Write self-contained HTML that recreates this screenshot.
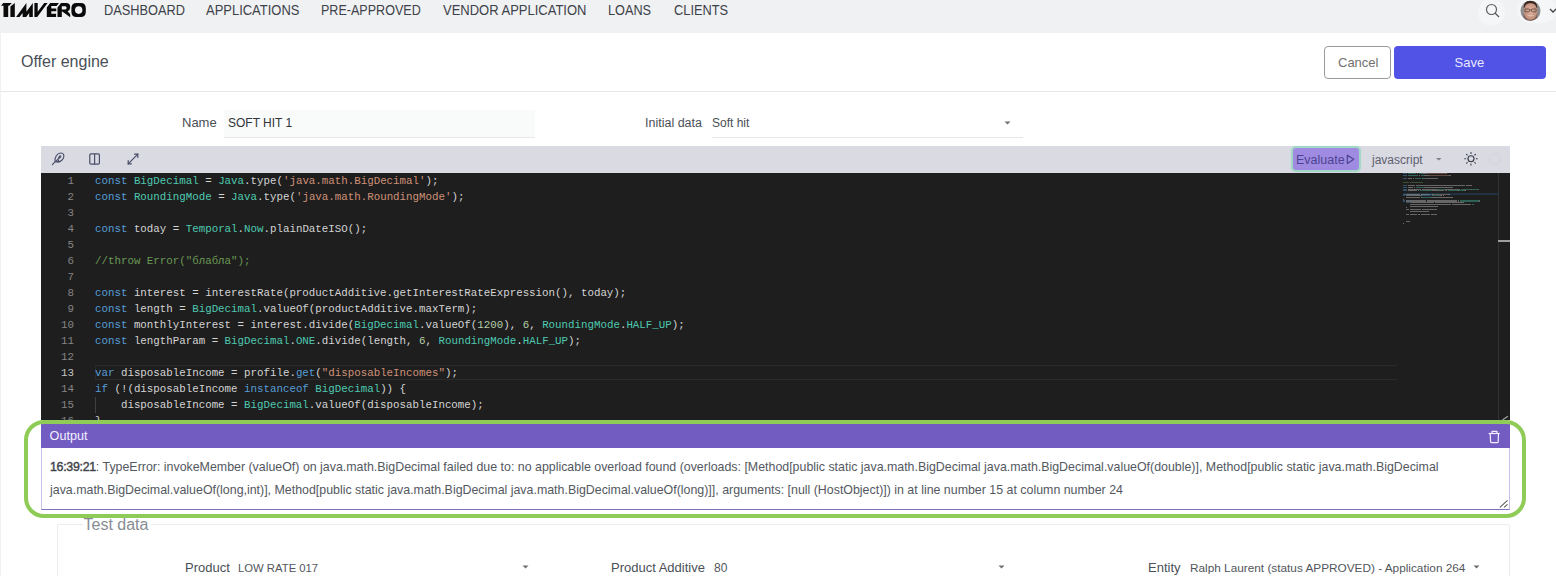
<!DOCTYPE html>
<html><head><meta charset="utf-8">
<style>
*{box-sizing:border-box;margin:0;padding:0}
html,body{width:1556px;height:576px;overflow:hidden;background:#f0f1f3;font-family:"Liberation Sans",sans-serif;position:relative}
.a{position:absolute;white-space:nowrap}
#panel{position:absolute;left:1px;top:33px;width:1555px;height:543px;background:#fff}
.nav{font-size:14px;color:#3d4149;top:2px;line-height:16px;transform-origin:0 0}
.code{position:absolute;left:41px;top:173px;width:1469px;height:247px;background:#1e1e1e;overflow:hidden}
.ln{position:absolute;left:0;width:33px;text-align:right;font-family:"Liberation Mono",monospace;font-size:10.8px;color:#858585;line-height:16px}
.cl{position:absolute;left:54px;font-family:"Liberation Mono",monospace;font-size:10.8px;color:#d4d4d4;line-height:16px;white-space:pre}
.k{color:#569cd6}.t{color:#4ec9b0}.s{color:#ce9178}.c{color:#6a9955}.n{color:#b5cea8}
.mmap i{position:absolute;height:1.2px;opacity:.4}
</style></head><body>
<!-- top nav -->
<svg class="a" style="left:0;top:0" width="90" height="20" viewBox="0 0 90 20"><g fill="#0a0a0a">
<path d="M1 5.7L3.3 3H11.8L9.2 5.7H8.2V17H3.5V5.7Z"/>
<path d="M10.4 6.6L14.8 3V17H10.4Z"/>
<path d="M16.1 17L26.4 3V11.65L32.8 3V17H29.2V12.9L26.2 17H22.6V12.9L19.5 17Z"/>
<path d="M34.4 3H37.7V11.8L44.2 3H47.6L37.2 17H34.4Z"/>
<path d="M46.8 17V7.5L50.2 3H58.9L56.6 6.1H51.3V8.6H56.3V11.2H51.3V13.8H56.1V17Z"/>
<path fill-rule="evenodd" d="M57.5 17V7.5L61 3H66.2Q70.2 3 70.2 7.2Q70.2 10.2 67.6 11.2L70.2 14.3V17.3L62.3 11.4H61.8V17ZM61.8 6.3V9.4H65.4Q66.6 9.4 66.6 7.85Q66.6 6.3 65.4 6.3Z"/>
<path fill-rule="evenodd" d="M76.5 3H80.7Q85.8 3 85.8 8.2V11.8Q85.8 17 80.7 17H76.5Q71.4 17 71.4 11.8V8.2Q71.4 3 76.5 3ZM78.7 6.3Q75 6.3 75 10.1Q75 13.9 78.7 13.9Q82.4 13.9 82.4 10.1Q82.4 6.3 78.7 6.3Z"/>
</g></svg>
<div class="a nav" style="left:103.5px;transform:scaleX(0.9132)">DASHBOARD</div>
<div class="a nav" style="left:206.0px;transform:scaleX(0.9257)">APPLICATIONS</div>
<div class="a nav" style="left:321.3px;transform:scaleX(0.8966)">PRE-APPROVED</div>
<div class="a nav" style="left:443.0px;transform:scaleX(0.9282)">VENDOR APPLICATION</div>
<div class="a nav" style="left:608.4px;transform:scaleX(0.9074)">LOANS</div>
<div class="a nav" style="left:673.5px;transform:scaleX(0.9154)">CLIENTS</div>
<!-- search -->
<div class="a" style="left:1478px;top:-1px;width:27px;height:27px;border-radius:50%;background:#f5f6f8"></div>
<svg class="a" style="left:1484px;top:3px" width="18" height="16" viewBox="0 0 18 16"><circle cx="7.5" cy="6.5" r="5" fill="none" stroke="#5a5a5a" stroke-width="1.15"/><line x1="11" y1="10" x2="15" y2="14" stroke="#5a5a5a" stroke-width="1.3"/></svg>
<div class="a" style="left:1517px;top:-3px;width:39px;height:26px;border-radius:13px;background:#f5f6f8"></div>
<svg class="a" style="left:1520px;top:0px" width="22" height="22" viewBox="0 0 22 22">
<defs><clipPath id="av"><circle cx="10.5" cy="10.8" r="10"/></clipPath><radialGradient id="fg" cx="0.5" cy="0.45" r="0.6"><stop offset="0" stop-color="#e2b4a0"/><stop offset="1" stop-color="#b88672"/></radialGradient></defs>
<g clip-path="url(#av)"><rect width="22" height="22" fill="#8f8f8f"/>
<ellipse cx="10.5" cy="11.5" rx="6.8" ry="9.5" fill="url(#fg)"/>
<path d="M3.6 7.5 Q4 0.5 10.5 0.6 Q17 0.5 17.4 7.5 L16.4 7.8 Q15.8 3.2 10.5 3.3 Q5.2 3.2 4.6 7.8 Z" fill="#3b2820"/>
<g fill="none" stroke="#3a2a26" stroke-width="0.75" opacity=".85"><rect x="4.8" y="9" width="4.8" height="2.8" rx="1"/><rect x="11.4" y="9" width="4.8" height="2.8" rx="1"/><path d="M9.6 10H11.4"/></g>
<path d="M6.5 15 Q10.5 17.5 14.5 15 Q10.5 16 6.5 15Z" fill="#f2ddd2"/>
<path d="M3.8 13 Q5 19.5 10.5 19.8 Q16 19.5 17.2 13 L17.5 22 H3.5Z" fill="#6b5048" opacity=".75"/>
</g></svg>
<svg class="a" style="left:1549px;top:8px" width="8" height="6" viewBox="0 0 8 6"><path d="M1 1 L4 4 L7 1" fill="none" stroke="#444" stroke-width="1.3"/></svg>

<div id="panel"></div>
<!-- header -->
<div class="a" style="left:21px;top:52px;font-size:16px;color:#4a4f57;line-height:19px">Offer engine</div>
<div class="a" style="left:1324px;top:46px;width:67px;height:33px;border:1px solid #9a9a9a;border-radius:4px;background:#fff"></div>
<div class="a" style="left:1338px;top:55px;font-size:13px;color:#707070;line-height:15px">Cancel</div>
<div class="a" style="left:1394px;top:46px;width:152px;height:33px;border-radius:4px;background:#5153e6"></div>
<div class="a" style="left:1454.5px;top:55px;font-size:13px;color:#e8e8ff;line-height:15px">Save</div>
<div class="a" style="left:1px;top:91px;width:1555px;height:1px;background:#e6e6e6"></div>

<!-- form row -->
<div class="a" style="left:182px;top:115.3px;font-size:13px;color:#4b5057;line-height:15px">Name</div>
<div class="a" style="left:224px;top:110px;width:311px;height:28px;background:#f9fafa;border-bottom:1px solid #e8e8e8"></div>
<div class="a" style="left:228px;top:116px;font-size:12px;color:#2f3338;line-height:15px">SOFT HIT 1</div>
<div class="a" style="left:645px;top:116px;font-size:12.5px;color:#4b5057;line-height:15px">Initial data</div>
<div class="a" style="left:712px;top:110px;width:311px;height:28px;background:#fff;border-bottom:1px solid #e6e6e6"></div>
<div class="a" style="left:712px;top:116px;font-size:12px;color:#4a4e55;line-height:15px">Soft hit</div>
<svg class="a" style="left:1004px;top:121px" width="7" height="4"><path d="M0.5 0.5H6.5L3.5 3.5Z" fill="#6e6e6e"/></svg>

<!-- editor toolbar -->
<div class="a" style="left:41px;top:146px;width:1469px;height:27px;background:#d9dae2"></div>
<svg class="a" style="left:51px;top:151px" width="15" height="15" viewBox="0 0 15 15"><g fill="none" stroke="#4a4e68" stroke-width="1.15" stroke-linecap="round" stroke-linejoin="round"><path d="M1.4 13.6 L4.2 10.6"/><path d="M4.2 10.8 C3.2 7.2 5.6 2.4 9.6 2 C12.4 1.8 13.4 4 12.6 6.6 C11.7 9.4 8.2 11.8 4.2 10.8 Z"/><path d="M5.2 9.8 C7 8.4 8.8 7 9.6 5.9 C10.2 5 9.3 4.4 8.5 5.1 C7.6 5.9 7.2 8 7.4 10"/><path d="M6 10.6 H8.8"/></g></svg>
<svg class="a" style="left:88px;top:152px" width="13" height="14" viewBox="0 0 13 14"><g fill="none" stroke="#4a4e68" stroke-width="1.2"><rect x="1.8" y="1.9" width="9.6" height="10.3" rx="1.2"/><line x1="6.6" y1="1.9" x2="6.6" y2="12.2"/></g></svg>
<svg class="a" style="left:126px;top:152px" width="14" height="14" viewBox="0 0 14 14"><g fill="none" stroke="#4a4e68" stroke-width="1.2" stroke-linecap="round"><path d="M2.2 11.8 L11.8 2.2"/><path d="M8.6 2.2 H11.8 V5.4"/><path d="M2.2 8.6 V11.8 H5.4"/></g></svg>
<div class="a" style="left:1291px;top:146px;width:70px;height:25.5px;border-radius:5px;background:#9f8ce2;border:2px solid #a3d8c6;box-shadow:0 0 1px #b0dccd"></div>
<div class="a" style="left:1296px;top:152.5px;font-size:12.5px;color:#4d4390;line-height:14px">Evaluate</div>
<svg class="a" style="left:1346px;top:153.5px" width="9" height="11" viewBox="0 0 9 11"><path d="M1.3 1.2 L7.8 5.3 L1.3 9.6 Z" fill="none" stroke="#4d4390" stroke-width="1.2" stroke-linejoin="round"/></svg>
<div class="a" style="left:1372px;top:152.8px;font-size:12px;color:#5f6170;line-height:14px">javascript</div>
<svg class="a" style="left:1435.5px;top:157.8px" width="6" height="3"><path d="M0 0H5.5L2.75 2.6Z" fill="#7e808c"/></svg>
<svg class="a" style="left:1463px;top:151px" width="16" height="16" viewBox="0 0 16 16"><g fill="none" stroke="#353748" stroke-width="1.1" stroke-linecap="round"><circle cx="8" cy="7.8" r="3"/><path d="M8 1.6V2.5M8 13.1V14M1.8 7.8H2.7M13.3 7.8H14.2M3.6 3.4L4.2 4M11.8 11.6L12.4 12.2M3.6 12.2L4.2 11.6M11.8 4L12.4 3.4"/></g></svg>
<div class="a" style="left:1489px;top:153px;width:12px;height:12px;border-radius:50%;border:1px solid #d2d3dc"></div>

<!-- code -->
<div class="code" id="code">
<div class="a" style="left:54px;top:192px;width:1302px;height:15px;border:1.5px solid #2a2a2a;border-right:none"></div>
<div class="a" style="left:54px;top:224px;width:1px;height:16px;background:#404040"></div>
<div class="ln" style="top:0">1</div><div class="ln" style="top:16px">2</div><div class="ln" style="top:32px">3</div><div class="ln" style="top:48px">4</div><div class="ln" style="top:64px">5</div><div class="ln" style="top:80px">6</div><div class="ln" style="top:96px">7</div><div class="ln" style="top:112px">8</div><div class="ln" style="top:128px">9</div><div class="ln" style="top:144px">10</div><div class="ln" style="top:160px">11</div><div class="ln" style="top:176px">12</div><div class="ln" style="top:192px;color:#c6c6c6">13</div><div class="ln" style="top:208px">14</div><div class="ln" style="top:224px">15</div><div class="ln" style="top:240px">16</div>
<div class="cl" style="top:0"><span class="k">const</span> <span class="t">BigDecimal</span> = <span class="t">Java</span>.type(<span class="s">'java.math.BigDecimal'</span>);</div>
<div class="cl" style="top:16px"><span class="k">const</span> <span class="t">RoundingMode</span> = <span class="t">Java</span>.type(<span class="s">'java.math.RoundingMode'</span>);</div>
<div class="cl" style="top:48px"><span class="k">const</span> today = <span class="t">Temporal</span>.<span class="t">Now</span>.plainDateISO();</div>
<div class="cl c" style="top:80px">//throw Error("блабла");</div>
<div class="cl" style="top:112px"><span class="k">const</span> interest = interestRate(productAdditive.getInterestRateExpression(), today);</div>
<div class="cl" style="top:128px"><span class="k">const</span> length = <span class="t">BigDecimal</span>.valueOf(productAdditive.maxTerm);</div>
<div class="cl" style="top:144px"><span class="k">const</span> monthlyInterest = interest.divide(<span class="t">BigDecimal</span>.valueOf(<span class="n">1200</span>), <span class="n">6</span>, <span class="t">RoundingMode</span>.<span class="t">HALF_UP</span>);</div>
<div class="cl" style="top:160px"><span class="k">const</span> lengthParam = <span class="t">BigDecimal</span>.<span class="t">ONE</span>.divide(length, <span class="n">6</span>, <span class="t">RoundingMode</span>.<span class="t">HALF_UP</span>);</div>
<div class="cl" style="top:192px"><span class="k">var</span> disposableIncome = profile.<span class="k">get</span>(<span class="s">"disposableIncomes"</span>);</div>
<div class="cl" style="top:208px"><span class="k">if</span> (!(disposableIncome <span class="k">instanceof</span> <span class="t">BigDecimal</span>)) {</div>
<div class="cl" style="top:224px">    disposableIncome = <span class="t">BigDecimal</span>.valueOf(disposableIncome);</div>
<div class="cl" style="top:240px">}</div>
<!--MM-->
<div class="a" style="left:1362px;top:20.4px;width:95px;height:1.7px;background:#264f78;opacity:.4"></div>
<div class="mmap"><i style="left:1362.0px;top:0.2px;width:4.2px;background:#569cd6"></i>
<i style="left:1367.0px;top:0.2px;width:8.4px;background:#4ec9b0"></i>
<i style="left:1376.3px;top:0.2px;width:0.8px;background:#d4d4d4"></i>
<i style="left:1378.0px;top:0.2px;width:3.4px;background:#4ec9b0"></i>
<i style="left:1381.3px;top:0.2px;width:5.0px;background:#d4d4d4"></i>
<i style="left:1386.4px;top:0.2px;width:18.5px;background:#ce9178"></i>
<i style="left:1404.8px;top:0.2px;width:1.7px;background:#d4d4d4"></i>
<i style="left:1362.0px;top:1.9px;width:4.2px;background:#569cd6"></i>
<i style="left:1367.0px;top:1.9px;width:10.1px;background:#4ec9b0"></i>
<i style="left:1378.0px;top:1.9px;width:0.8px;background:#d4d4d4"></i>
<i style="left:1379.6px;top:1.9px;width:3.4px;background:#4ec9b0"></i>
<i style="left:1383.0px;top:1.9px;width:5.0px;background:#d4d4d4"></i>
<i style="left:1388.0px;top:1.9px;width:20.2px;background:#ce9178"></i>
<i style="left:1408.2px;top:1.9px;width:1.7px;background:#d4d4d4"></i>
<i style="left:1362.0px;top:5.3px;width:4.2px;background:#569cd6"></i>
<i style="left:1367.0px;top:5.3px;width:4.2px;background:#d4d4d4"></i>
<i style="left:1372.1px;top:5.3px;width:0.8px;background:#d4d4d4"></i>
<i style="left:1373.8px;top:5.3px;width:6.7px;background:#4ec9b0"></i>
<i style="left:1380.5px;top:5.3px;width:0.8px;background:#d4d4d4"></i>
<i style="left:1381.3px;top:5.3px;width:2.5px;background:#4ec9b0"></i>
<i style="left:1383.8px;top:5.3px;width:13.4px;background:#d4d4d4"></i>
<i style="left:1362.0px;top:8.7px;width:5.9px;background:#6a9955"></i>
<i style="left:1368.7px;top:8.7px;width:13.4px;background:#6a9955"></i>
<i style="left:1362.0px;top:12.1px;width:4.2px;background:#569cd6"></i>
<i style="left:1367.0px;top:12.1px;width:6.7px;background:#d4d4d4"></i>
<i style="left:1374.6px;top:12.1px;width:0.8px;background:#d4d4d4"></i>
<i style="left:1376.3px;top:12.1px;width:47.9px;background:#d4d4d4"></i>
<i style="left:1425.0px;top:12.1px;width:5.9px;background:#d4d4d4"></i>
<i style="left:1362.0px;top:13.8px;width:4.2px;background:#569cd6"></i>
<i style="left:1367.0px;top:13.8px;width:5.0px;background:#d4d4d4"></i>
<i style="left:1372.9px;top:13.8px;width:0.8px;background:#d4d4d4"></i>
<i style="left:1374.6px;top:13.8px;width:8.4px;background:#4ec9b0"></i>
<i style="left:1383.0px;top:13.8px;width:28.6px;background:#d4d4d4"></i>
<i style="left:1362.0px;top:15.5px;width:4.2px;background:#569cd6"></i>
<i style="left:1367.0px;top:15.5px;width:12.6px;background:#d4d4d4"></i>
<i style="left:1380.5px;top:15.5px;width:0.8px;background:#d4d4d4"></i>
<i style="left:1382.2px;top:15.5px;width:13.4px;background:#d4d4d4"></i>
<i style="left:1395.6px;top:15.5px;width:8.4px;background:#4ec9b0"></i>
<i style="left:1404.0px;top:15.5px;width:7.6px;background:#d4d4d4"></i>
<i style="left:1411.6px;top:15.5px;width:3.4px;background:#b5cea8"></i>
<i style="left:1414.9px;top:15.5px;width:1.7px;background:#d4d4d4"></i>
<i style="left:1417.4px;top:15.5px;width:0.8px;background:#b5cea8"></i>
<i style="left:1418.3px;top:15.5px;width:0.8px;background:#d4d4d4"></i>
<i style="left:1420.0px;top:15.5px;width:10.1px;background:#4ec9b0"></i>
<i style="left:1430.0px;top:15.5px;width:0.8px;background:#d4d4d4"></i>
<i style="left:1430.9px;top:15.5px;width:5.9px;background:#4ec9b0"></i>
<i style="left:1436.8px;top:15.5px;width:1.7px;background:#d4d4d4"></i>
<i style="left:1362.0px;top:17.2px;width:4.2px;background:#569cd6"></i>
<i style="left:1367.0px;top:17.2px;width:9.2px;background:#d4d4d4"></i>
<i style="left:1377.1px;top:17.2px;width:0.8px;background:#d4d4d4"></i>
<i style="left:1378.8px;top:17.2px;width:8.4px;background:#4ec9b0"></i>
<i style="left:1387.2px;top:17.2px;width:0.8px;background:#d4d4d4"></i>
<i style="left:1388.0px;top:17.2px;width:2.5px;background:#4ec9b0"></i>
<i style="left:1390.6px;top:17.2px;width:12.6px;background:#d4d4d4"></i>
<i style="left:1404.0px;top:17.2px;width:0.8px;background:#b5cea8"></i>
<i style="left:1404.8px;top:17.2px;width:0.8px;background:#d4d4d4"></i>
<i style="left:1406.5px;top:17.2px;width:10.1px;background:#4ec9b0"></i>
<i style="left:1416.6px;top:17.2px;width:0.8px;background:#d4d4d4"></i>
<i style="left:1417.4px;top:17.2px;width:5.9px;background:#4ec9b0"></i>
<i style="left:1423.3px;top:17.2px;width:1.7px;background:#d4d4d4"></i>
<i style="left:1362.0px;top:20.6px;width:2.5px;background:#569cd6"></i>
<i style="left:1365.4px;top:20.6px;width:13.4px;background:#d4d4d4"></i>
<i style="left:1379.6px;top:20.6px;width:0.8px;background:#d4d4d4"></i>
<i style="left:1381.3px;top:20.6px;width:6.7px;background:#d4d4d4"></i>
<i style="left:1388.0px;top:20.6px;width:2.5px;background:#569cd6"></i>
<i style="left:1390.6px;top:20.6px;width:0.8px;background:#d4d4d4"></i>
<i style="left:1391.4px;top:20.6px;width:16.0px;background:#ce9178"></i>
<i style="left:1407.4px;top:20.6px;width:1.7px;background:#d4d4d4"></i>
<i style="left:1362.0px;top:22.3px;width:1.7px;background:#569cd6"></i>
<i style="left:1364.5px;top:22.3px;width:16.0px;background:#d4d4d4"></i>
<i style="left:1381.3px;top:22.3px;width:8.4px;background:#569cd6"></i>
<i style="left:1390.6px;top:22.3px;width:8.4px;background:#4ec9b0"></i>
<i style="left:1399.0px;top:22.3px;width:1.7px;background:#d4d4d4"></i>
<i style="left:1401.5px;top:22.3px;width:0.8px;background:#d4d4d4"></i>
<i style="left:1365.4px;top:24.0px;width:13.4px;background:#d4d4d4"></i>
<i style="left:1379.6px;top:24.0px;width:0.8px;background:#d4d4d4"></i>
<i style="left:1381.3px;top:24.0px;width:8.4px;background:#4ec9b0"></i>
<i style="left:1389.7px;top:24.0px;width:22.7px;background:#d4d4d4"></i>
<i style="left:1362.0px;top:25.7px;width:0.8px;background:#d4d4d4"></i>
<i style="left:1362.0px;top:27.4px;width:1.7px;background:#569cd6"></i>
<i style="left:1364.5px;top:27.4px;width:20.2px;background:#d4d4d4"></i>
<i style="left:1385.5px;top:27.4px;width:30.2px;background:#d4d4d4"></i>
<i style="left:1416.6px;top:27.4px;width:1.7px;background:#d4d4d4"></i>
<i style="left:1419.1px;top:27.4px;width:18.5px;background:#4ec9b0"></i>
<i style="left:1438.4px;top:27.4px;width:0.8px;background:#d4d4d4"></i>
<i style="left:1365.4px;top:29.1px;width:4.2px;background:#569cd6"></i>
<i style="left:1370.4px;top:29.1px;width:22.7px;background:#d4d4d4"></i>
<i style="left:1393.9px;top:29.1px;width:29.4px;background:#d4d4d4"></i>
<i style="left:1368.7px;top:30.8px;width:41.2px;background:#d4d4d4"></i>
<i style="left:1410.7px;top:30.8px;width:19.3px;background:#d4d4d4"></i>
<i style="left:1430.9px;top:30.8px;width:1.7px;background:#4ec9b0"></i>
<i style="left:1368.7px;top:32.5px;width:28.6px;background:#d4d4d4"></i>
<i style="left:1365.4px;top:34.2px;width:0.8px;background:#d4d4d4"></i>
<i style="left:1365.4px;top:35.9px;width:2.5px;background:#d4d4d4"></i>
<i style="left:1368.7px;top:35.9px;width:11.8px;background:#d4d4d4"></i>
<i style="left:1381.3px;top:35.9px;width:15.1px;background:#d4d4d4"></i>
<i style="left:1368.7px;top:37.6px;width:19.3px;background:#d4d4d4"></i>
<i style="left:1365.4px;top:41.0px;width:2.5px;background:#d4d4d4"></i>
<i style="left:1368.7px;top:41.0px;width:7.6px;background:#d4d4d4"></i>
<i style="left:1377.1px;top:41.0px;width:1.7px;background:#d4d4d4"></i>
<i style="left:1379.6px;top:41.0px;width:9.2px;background:#d4d4d4"></i>
<i style="left:1389.7px;top:41.0px;width:6.7px;background:#d4d4d4"></i>
<i style="left:1365.4px;top:47.8px;width:3.4px;background:#d4d4d4"></i>
<i style="left:1362.0px;top:49.5px;width:0.8px;background:#d4d4d4"></i>
</div>
<!--/MM-->
<div class="a" style="left:1457px;top:0;width:1px;height:247px;background:#333"></div>
<div class="a" style="left:1457px;top:67px;width:12px;height:2px;background:#9e9e9e"></div>
<svg class="a" style="left:1460px;top:240px" width="9" height="7" viewBox="0 0 9 7"><path d="M2 6.6L6.6 3.4" stroke="#a0a0a0" stroke-width="1.2" stroke-linecap="round"/></svg>
</div>

<!-- output -->
<div class="a" style="left:41px;top:424px;width:1469px;height:24px;background:#725cc2"></div>
<div class="a" style="left:49.6px;top:428.6px;font-size:12.6px;color:#f4f0ff;line-height:14px">Output</div>
<svg class="a" style="left:1487px;top:429px" width="14" height="15" viewBox="0 0 14 15"><g fill="none" stroke="#f2eeff" stroke-width="1.2" stroke-linejoin="round"><path d="M1.6 4.5H12.8"/><path d="M5 4.5V2.3H10V4.5"/><path d="M3.2 4.5L3.6 12.7Q3.7 13.7 4.7 13.7H10.1Q11.1 13.7 11.2 12.7L11.5 4.5"/></g></svg>
<div class="a" style="left:41px;top:448px;width:1469px;height:62px;background:#fff;border-left:1.5px solid #c6bfe6;border-right:1px solid #c6bfe6;border-bottom:1.5px solid #7d72bb"></div>
<svg class="a" style="left:1498px;top:498px" width="11" height="11" viewBox="0 0 11 11"><g stroke="#606060" stroke-width="1.1" stroke-linecap="round"><path d="M2.2 9.2L9.2 2.6"/><path d="M6.4 9.2L9.2 6.7"/></g></svg>
<div class="a" style="left:50px;top:456.2px;font-size:12.4px;color:#54585f;line-height:22.45px"><span style="color:#3e4249;letter-spacing:-0.3px;-webkit-text-stroke:0.4px #3e4249">16:39:21</span>: TypeError: invokeMember (valueOf) on java.math.BigDecimal failed due to: no applicable overload found (overloads: [Method[public static java.math.BigDecimal java.math.BigDecimal.valueOf(double)], Method[public static java.math.BigDecimal<br>java.math.BigDecimal.valueOf(long,int)], Method[public static java.math.BigDecimal java.math.BigDecimal.valueOf(long)]], arguments: [null (HostObject)]) in at line number 15 at column number 24</div>


<!-- test data -->
<div class="a" style="left:56.6px;top:524px;width:1453.4px;height:60px;border:1px solid #eaecf0;border-bottom:none;border-radius:2px 2px 0 0"></div>
<div class="a" style="left:82.5px;top:518px;width:68.5px;height:16px;background:#fff"></div>
<div class="a" style="left:83.5px;top:515.3px;font-size:16px;color:#878c93;line-height:19px">Test data</div>
<div class="a" style="left:185px;top:560px;font-size:13px;color:#4b5057;line-height:15px">Product</div>
<div class="a" style="left:238px;top:560.7px;font-size:11.3px;color:#52565c;line-height:15px">LOW RATE 017</div>
<svg class="a" style="left:522px;top:565px" width="7" height="4"><path d="M0.5 0.5H6.5L3.5 3.5Z" fill="#6e6e6e"/></svg>
<div class="a" style="left:611px;top:560px;font-size:13px;color:#4b5057;line-height:15px">Product Additive</div>
<div class="a" style="left:714px;top:560.7px;font-size:12px;color:#52565c;line-height:15px">80</div>
<svg class="a" style="left:998px;top:565px" width="7" height="4"><path d="M0.5 0.5H6.5L3.5 3.5Z" fill="#6e6e6e"/></svg>
<div class="a" style="left:1148px;top:560px;font-size:13px;color:#4b5057;line-height:15px">Entity</div>
<div class="a" style="left:1190px;top:560.7px;font-size:11.8px;color:#52565c;line-height:15px">Ralph Laurent (status APPROVED) - Application 264</div>
<svg class="a" style="left:1473px;top:565px" width="7" height="4"><path d="M0.5 0.5H6.5L3.5 3.5Z" fill="#6e6e6e"/></svg>
<!-- green highlight -->
<div class="a" style="left:23.8px;top:419.6px;width:1502.6px;height:98px;border:4.6px solid #8ecb57;border-radius:20px"></div>
</body></html>
